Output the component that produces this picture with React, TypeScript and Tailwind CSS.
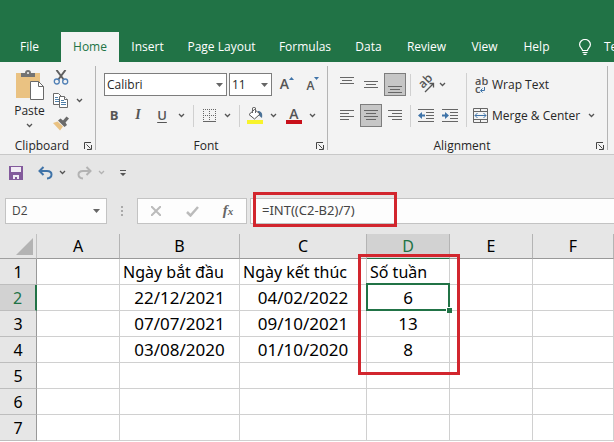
import { useState } from "react";
import type { ReactNode } from "react";
import clsx from "clsx";

const tabs = [
  { name: "File", width: "w-[59px] pr-1" },
  { name: "Home", width: "w-[58px]" },
  { name: "Insert", width: "w-[57px]" },
  { name: "Page Layout", width: "w-[91px]" },
  { name: "Formulas", width: "w-[76px]" },
  { name: "Data", width: "w-[51px]" },
  { name: "Review", width: "w-[65px]" },
  { name: "View", width: "w-[51px]" },
  { name: "Help", width: "w-[53px]" },
];

const columns = ["A", "B", "C", "D", "E", "F"];

const rows = [
  ["", "Ngày bắt đầu", "Ngày kết thúc", "Số tuần", "", ""],
  ["", "22/12/2021", "04/02/2022", "6", "", ""],
  ["", "07/07/2021", "09/10/2021", "13", "", ""],
  ["", "03/08/2020", "01/10/2020", "8", "", ""],
  ["", "", "", "", "", ""],
  ["", "", "", "", "", ""],
  ["", "", "", "", "", ""],
];

function Caret({ className = "text-[#555]" }: { className?: string }) {
  return (
    <svg width="7" height="5" viewBox="0 0 7 5" className={className}>
      <path d="M1 1l2.5 2.5L6 1" fill="none" stroke="currentColor" strokeWidth="1.3" />
    </svg>
  );
}

function Triangle({ className }: { className?: string }) {
  return (
    <svg width="7" height="4" viewBox="0 0 7 4" className={className}>
      <path d="M0 0h7L3.5 4z" fill="#666" />
    </svg>
  );
}

interface ToolProps {
  label: string;
  width?: string;
  pressed?: boolean;
  children: ReactNode;
}

function Tool({ label, width = "w-6", pressed, children }: ToolProps) {
  return (
    <button
      type="button"
      aria-label={label}
      aria-pressed={pressed}
      className={clsx(
        "flex h-[23px] shrink-0 items-center justify-center",
        width,
        pressed && "border border-[#7d7d7d] bg-[#c6c6c6]"
      )}
    >
      {children}
    </button>
  );
}

function Separator({ className = "h-[22px]" }: { className?: string }) {
  return <div className={clsx("w-px shrink-0 bg-[#d0d0d0]", className)} />;
}

function GroupLabel({ name }: { name: string }) {
  return (
    <div className="flex h-4 items-center pr-[3px]">
      <span className="flex-1 text-center">{name}</span>
      <button type="button" aria-label={`${name} settings`}>
        <svg width="8" height="8" viewBox="0 0 8 8" fill="none" stroke="#444">
          <path d="M.5 7V.5H7M2.5 2.5l4 4M7.5 3v4.5H3" />
        </svg>
      </button>
    </div>
  );
}

interface LinesProps {
  lines: [number, number, number][];
}

// Each line is [x, y, length]
function Lines({ lines }: LinesProps) {
  return (
    <svg width="16" height="16" viewBox="0 0 16 16" fill="#666" className="shrink-0">
      {lines.map(([x, y, length]) => (
        <rect key={y} x={x} y={y} width={length} height="1" />
      ))}
    </svg>
  );
}

function ClipboardGroup() {
  return (
    <section aria-label="Clipboard" className="flex w-[95px] shrink-0 flex-col">
      <div className="flex flex-1 pt-2">
        <button type="button" className="flex w-[50px] flex-col items-center pl-[9px]">
          <svg width="28" height="30" viewBox="0 0 28 30" className="shrink-0">
            <path d="M0 3h24v25H0z" fill="#eac282" />
            <path d="M5 7V3h4c0-2 1-3 3-3s3 1 3 3h4v4z" fill="#737373" />
            <circle cx="12" cy="3" r="1" fill="#f3f3f3" />
            <path d="M14.5 11.5h8l5 5v13h-13z" fill="#fff" stroke="#6a6a6a" />
            <path d="M22.5 11.5v5h5" fill="none" stroke="#6a6a6a" />
          </svg>
          <span className="mt-[3px] leading-4">Paste</span>
          <span className="mt-1">
            <Caret />
          </span>
        </button>
        <div className="flex flex-col gap-2 pl-[3px]">
          <button type="button" aria-label="Cut" className="h-[15px] w-4">
            <svg width="16" height="15" viewBox="0 0 16 15" fill="none">
              <path d="M3.5 0L11 10M12.5 0L5 10" stroke="#5f5f5f" strokeWidth="2" />
              <circle cx="3.8" cy="11.5" r="2.5" stroke="#4f7fb5" strokeWidth="1.3" />
              <circle cx="12.2" cy="11.5" r="2.5" stroke="#4f7fb5" strokeWidth="1.3" />
            </svg>
          </button>
          <div className="flex items-center gap-[7px]">
            <button type="button" aria-label="Copy" className="h-[15px] w-4">
              <svg width="16" height="15" viewBox="0 0 16 15" fill="#fff" stroke="#6a6a6a">
                <path d="M.5.5h5l3 3v8h-8z" />
                <path d="M2 4.5h3M2 6.5h4M2 8.5h4" stroke="#4f7fa8" />
                <path d="M6.5 3.5h5l3 3v8h-8z" />
                <path d="M11.5 3.5v3h3" />
                <path d="M8 7.5h3M8 9.5h5M8 11.5h5" stroke="#4f7fa8" />
              </svg>
            </button>
            <button type="button" aria-label="Copy options">
              <Caret />
            </button>
          </div>
          <button type="button" aria-label="Format Painter" className="h-[15px] w-4">
            <svg width="16" height="15" viewBox="0 0 16 15">
              <path d="M0 7l4.5-1.5 5.5 5L7 14.5z" fill="#eac282" />
              <path d="M5 4.5L7.5 2.5 10 4.5 13.5.5 16 2.5l-3.5 4L14 9l-2.5 2z" fill="#6a6a6a" />
            </svg>
          </button>
        </div>
      </div>
      <GroupLabel name="Clipboard" />
    </section>
  );
}

function FontGroup() {
  return (
    <section aria-label="Font" className="flex w-[231px] shrink-0 flex-col">
      <div className="flex flex-1 flex-col gap-2 pt-[11px]">
        <div className="flex items-center gap-[2px] pl-2">
          <div className="relative">
            <select
              aria-label="Font name"
              className="block h-[23px] w-[123px] appearance-none border border-[#7d7d7d] bg-white pl-[2px]"
            >
              <option>Calibri</option>
            </select>
            <Triangle className="pointer-events-none absolute top-[10px] right-1" />
          </div>
          <div className="relative">
            <select
              aria-label="Font size"
              className="block h-[23px] w-[43px] appearance-none border border-[#7d7d7d] bg-white pl-[2px]"
            >
              <option>11</option>
            </select>
            <Triangle className="pointer-events-none absolute top-[10px] right-1" />
          </div>
          <Tool label="Increase Font Size" width="w-[26px]">
            <span className="text-[14px] font-semibold text-[#555]">A</span>
            <svg width="5" height="3" viewBox="0 0 5 3" className="mb-3 shrink-0">
              <path d="M0 3h5L2.5 0z" fill="#3f73a8" />
            </svg>
          </Tool>
          <Tool label="Decrease Font Size" width="w-[22px]">
            <span className="pt-[3px] text-xs font-semibold text-[#555]">A</span>
            <svg width="5" height="3" viewBox="0 0 5 3" className="mb-3 shrink-0">
              <path d="M0 0h5L2.5 3z" fill="#3f73a8" />
            </svg>
          </Tool>
        </div>
        <div className="flex items-center pl-[6px]">
          <Tool label="Bold">
            <span className="text-[13px] font-bold text-[#555]">B</span>
          </Tool>
          <Tool label="Italic">
            <span className="font-['Liberation_Serif',serif] text-[14px] font-bold text-[#555] italic">
              I
            </span>
          </Tool>
          <Tool label="Underline">
            <span className="text-[13px] font-semibold text-[#555] underline underline-offset-2">
              U
            </span>
          </Tool>
          <Tool label="Underline options" width="w-[14px]">
            <Caret />
          </Tool>
          <Separator className="mx-[5px] h-[22px]" />
          <Tool label="Borders" width="w-5">
            <svg width="13" height="13" viewBox="0 0 13 13" fill="none" stroke="#666">
              <path d="M0 .5h13M0 6.5h13M.5 0v13M6.5 0v13M12.5 0v13" strokeDasharray="1 1" />
              <path d="M0 12.5h13" />
            </svg>
          </Tool>
          <Tool label="Borders options" width="w-4">
            <Caret />
          </Tool>
          <Separator className="mx-1 h-[22px]" />
          <Tool label="Fill Color" width="w-[22px]">
            <svg width="16" height="17" viewBox="0 0 16 17">
              <path d="M11 4c3 0 5 2 4 7-2-1-3-3-4-4z" fill="#4b7297" />
              <path d="M2 7.5l5.5-5L13 7l-5.5 5z" fill="#fff" stroke="#555" />
              <path d="M5.5 6V1c0-1 3-1 3 0v5" fill="none" stroke="#666" />
              <path d="M0 13h16v4H0z" fill="#f8f32b" />
            </svg>
          </Tool>
          <Tool label="Fill Color options" width="w-[14px]">
            <Caret />
          </Tool>
          <Tool label="Font Color" width="w-7">
            <span className="flex w-4 flex-col items-center">
              <span className="text-[14px] leading-[13px] font-semibold text-[#555]">A</span>
              <span className="h-1 w-4 bg-[#c8101a]" />
            </span>
          </Tool>
          <Tool label="Font Color options" width="w-2">
            <Caret />
          </Tool>
        </div>
      </div>
      <GroupLabel name="Font" />
    </section>
  );
}

function AlignmentGroup() {
  return (
    <section aria-label="Alignment" className="flex w-[279px] shrink-0 flex-col">
      <div className="flex flex-1 pt-[11px] pl-2">
        <div className="flex flex-col gap-2">
          <div className="flex items-center">
            <Tool label="Top Align" width="w-[22px]">
              <Lines lines={[[1, 0, 14], [3, 3, 10], [1, 6, 14]]} />
            </Tool>
            <Tool label="Middle Align" width="w-[26px]">
              <Lines lines={[[1, 4, 14], [3, 7, 10], [1, 10, 14]]} />
            </Tool>
            <Tool label="Bottom Align" width="w-[22px]" pressed>
              <Lines lines={[[1, 9, 14], [3, 12, 10], [1, 15, 14]]} />
            </Tool>
            <Separator className="mx-1 h-[22px]" />
            <Tool label="Orientation" width="w-[22px]">
              <svg width="18" height="17" viewBox="0 0 18 17" overflow="visible">
                <text
                  x="6"
                  y="13"
                  transform="rotate(-45 6 13)"
                  fontSize="12"
                  fontWeight="600"
                  fill="#555"
                >
                  ab
                </text>
                <path d="M8 16l8-8M12.5 7.500h4v4" fill="none" stroke="#555" strokeWidth="1.3" />
              </svg>
            </Tool>
            <Tool label="Orientation options" width="w-[10px]">
              <Caret />
            </Tool>
          </div>
          <div className="flex items-center">
            <Tool label="Align Left" width="w-[22px]">
              <Lines lines={[[1, 2, 14], [1, 5, 9], [1, 8, 14], [1, 11, 9]]} />
            </Tool>
            <div className="flex w-[26px] justify-center">
              <Tool label="Center" width="w-[22px]" pressed>
                <Lines lines={[[1, 2, 14], [3, 5, 10], [1, 8, 14], [3, 11, 10]]} />
              </Tool>
            </div>
            <Tool label="Align Right" width="w-[22px]">
              <Lines lines={[[1, 2, 14], [5, 5, 10], [1, 8, 14], [5, 11, 10]]} />
            </Tool>
            <Separator className="mx-1 h-[22px]" />
            <Tool label="Decrease Indent" width="w-[22px]">
              <svg width="16" height="14" viewBox="0 0 16 14">
                <path d="M0 .5h16M8 3.5h8M8 6.5h8M8 9.5h8M0 12.5h16" stroke="#666" />
                <path d="M0 6.500L4 3v2.500h3v2H4V10z" fill="#3f73a8" />
              </svg>
            </Tool>
            <Tool label="Increase Indent" width="w-[26px]">
              <svg width="16" height="14" viewBox="0 0 16 14">
                <path d="M0 .5h16M8 3.5h8M8 6.5h8M8 9.5h8M0 12.5h16" stroke="#666" />
                <path d="M7 6.500L3 3v2.500H0v2h3V10z" fill="#3f73a8" />
              </svg>
            </Tool>
          </div>
        </div>
        <Separator className="mr-[6px] ml-[3px] h-[54px]" />
        <div className="flex flex-1 flex-col gap-2">
          <button type="button" className="flex h-[23px] items-center gap-1">
            <span className="flex w-[15px] flex-col pl-[2px] text-left text-[11px] leading-2 font-semibold text-[#555]">
              <span>ab</span>
              <span className="flex items-end">
                c
                <svg width="5" height="6" viewBox="0 0 5 6" fill="none" stroke="#3f73a8">
                  <path d="M4.5 0v3.500H1M2.500 1.500l-2 2 2 2" />
                </svg>
              </span>
            </span>
            <span>Wrap Text</span>
          </button>
          <div className="flex items-center justify-between pr-3">
            <button type="button" className="flex h-[23px] items-center gap-1">
              <svg width="15" height="15" viewBox="0 0 15 15" fill="none" stroke="#666">
                <path d="M.5.5h14v14H.5zM0 3.5h15M0 11.5h15M7.5 0v3.5M7.5 11.5v3.5" />
                <path d="M2 7.5h11M4.5 5L2 7.5 4.5 10M10.5 5L13 7.5 10.5 10" stroke="#3f73a8" />
              </svg>
              <span>Merge &amp; Center</span>
            </button>
            <button type="button" aria-label="Merge options">
              <Caret />
            </button>
          </div>
        </div>
      </div>
      <GroupLabel name="Alignment" />
    </section>
  );
}

function QuickAccess() {
  return (
    <div className="flex h-[43px] items-center pb-2 pl-[9px]">
      <button type="button" aria-label="Save">
        <svg width="14" height="14" viewBox="0 0 14 14">
          <path d="M0 0h14v14H0z" fill="#835a9c" />
          <path d="M2 1h10v5H2zM4 9h6v4H8v-2H6v2H4z" fill="#f1ebf4" />
        </svg>
      </button>
      <button type="button" aria-label="Undo" className="ml-[15px]">
        <svg width="15" height="14" viewBox="0 0 15 14" fill="none" stroke="#3f73a8">
          <path d="M5.5 1L1.5 5l4 4M2 5h7c6 0 6 7 0 7.5" strokeWidth="2" />
        </svg>
      </button>
      <button type="button" aria-label="Undo options" className="ml-[6px]">
        <Caret />
      </button>
      <button type="button" aria-label="Redo" className="ml-[11px]">
        <svg width="15" height="14" viewBox="0 0 15 14" fill="none" stroke="#b3b3b3">
          <path d="M9.5 1l4 4-4 4M13 5H6C0 5 0 12 6 12.5" strokeWidth="2" />
        </svg>
      </button>
      <button type="button" aria-label="Redo options" className="ml-[6px]">
        <Caret className="text-[#b3b3b3]" />
      </button>
      <button type="button" aria-label="Customize Quick Access Toolbar" className="ml-[15px]">
        <svg width="6" height="6" viewBox="0 0 6 6" fill="#555">
          <path d="M0 0h6v1H0zM0 3h6L3 6z" />
        </svg>
      </button>
    </div>
  );
}

function FormulaBar() {
  const [formula, setFormula] = useState("=INT((C2-B2)/7)");

  return (
    <div className="flex h-[26px] pl-[5px] text-[#444]">
      <div className="flex w-[102px] shrink-0 items-center border border-[#c3c3c3] bg-[#fdfdfd] pr-[6px]">
        <input
          aria-label="Name box"
          defaultValue="D2"
          className="w-full min-w-0 bg-transparent pl-[6px] outline-none"
        />
        <button type="button" aria-label="Named cells">
          <Triangle />
        </button>
      </div>
      <div className="flex w-[30px] shrink-0 flex-col items-center justify-center gap-[2px]">
        <span className="size-[2px] bg-[#aaa]" />
        <span className="size-[2px] bg-[#aaa]" />
        <span className="size-[2px] bg-[#aaa]" />
      </div>
      <div className="flex w-[110px] shrink-0 items-center border border-[#c3c3c3] bg-[#fdfdfd]">
        <Tool label="Cancel" width="w-9">
          <svg width="10" height="10" viewBox="0 0 10 10" stroke="#bbb" strokeWidth="2">
            <path d="M0 0l10 10M10 0L0 10" />
          </svg>
        </Tool>
        <Tool label="Enter" width="w-9">
          <svg width="13" height="11" viewBox="0 0 13 11" fill="none" stroke="#bbb" strokeWidth="2.5">
            <path d="M1 6l3.5 3.5L12 1" />
          </svg>
        </Tool>
        <Tool label="Insert Function" width="w-9">
          <span className="font-['Liberation_Serif',serif] text-[15px] font-bold text-[#666] italic">
            f<span className="text-[11px]">x</span>
          </span>
        </Tool>
      </div>
      <div className="relative ml-[3px] flex flex-1 border-y border-l border-[#c3c3c3] bg-[#fdfdfd]">
        <input
          aria-label="Formula"
          value={formula}
          onChange={(e) => {
            setFormula(e.target.value);
          }}
          className="w-full min-w-0 bg-transparent pl-[11px] font-['Noto_Sans',sans-serif] text-[13px] outline-none"
        />
        <div className="pointer-events-none absolute -top-[7px] left-[2px] h-[35px] w-36 border-3 border-[#d2262e]" />
      </div>
    </div>
  );
}

function Sheet() {
  return (
    <table className="w-full table-fixed border-separate border-spacing-0 bg-white text-center font-['Noto_Sans',sans-serif] text-[16px] leading-6 text-black">
      <colgroup>
        <col className="w-[37px]" />
        <col className="w-[83px]" />
        <col className="w-[120px]" />
        <col className="w-[127px]" />
        <col className="w-[83px]" />
        <col className="w-[83px]" />
        <col />
      </colgroup>
      <thead>
        <tr className="h-[25px] bg-[#e6e6e6]">
          <th className="border-r border-b border-[#a0a0a0] border-r-[#c0c0c0] p-0">
            <svg width="17" height="17" viewBox="0 0 17 17" className="ml-4">
              <path d="M17 0v17H0z" fill="#b3b3b3" />
            </svg>
          </th>
          {columns.map((column) => (
            <th
              key={column}
              scope="col"
              className={clsx(
                "border-r border-b border-r-[#b4b4b4] p-0 font-normal",
                column === "D"
                  ? "border-b-[#217346] bg-[#d2d2d2] text-[#217346]"
                  : "border-b-[#999]"
              )}
            >
              {column}
            </th>
          ))}
        </tr>
      </thead>
      <tbody>
        {rows.map((cells, r) => (
          <tr key={r} className="h-[26px]">
            <th
              scope="row"
              className={clsx(
                "border-b border-b-[#bdbdbd] p-0 font-normal",
                r === 1
                  ? "border-r-2 border-r-[#217346] bg-[#d2d2d2] text-[#217346]"
                  : "border-r border-r-[#999] bg-[#e6e6e6]"
              )}
            >
              {r + 1}
            </th>
            {cells.map((cell, c) => (
              <td
                key={c}
                className={clsx(
                  "relative border-r border-b border-[#d0d0d0] whitespace-nowrap",
                  r === 0 ? "py-0 pr-0 pl-[3px] text-left" : "p-0 text-[17px]"
                )}
              >
                {cell}
                {r === 0 && c === 3 && (
                  <div className="pointer-events-none absolute -top-[5px] -left-[9px] z-10 h-[121px] w-[102px] border-3 border-[#d2262e]" />
                )}
                {r === 1 && c === 3 && (
                  <>
                    <div className="pointer-events-none absolute -inset-x-px -top-[2px] -bottom-px border-2 border-[#217346]" />
                    <div className="absolute -right-[3px] -bottom-[3px] z-10 size-[6px] border-t border-l border-white bg-[#217346]" />
                  </>
                )}
              </td>
            ))}
          </tr>
        ))}
      </tbody>
    </table>
  );
}

export default function App() {
  const [active, setActive] = useState("Home");

  return (
    <div className="min-h-screen overflow-hidden bg-white font-['Open_Sans',sans-serif] text-xs text-[#262626]">
      <header className="bg-[#217346] pt-8 text-white">
        <nav className="flex h-[30px] pl-[2px]">
          {tabs.map(({ name, width }) => (
            <button
              key={name}
              type="button"
              onClick={() => {
                setActive(name);
              }}
              className={clsx(
                "shrink-0 whitespace-nowrap",
                width,
                name === active && "bg-[#f3f3f3] text-[#217346]"
              )}
            >
              {name}
            </button>
          ))}
          <button type="button" className="flex shrink-0 items-center gap-[13px] pl-4">
            <svg width="12" height="16" viewBox="0 0 12 16" fill="none" stroke="#fff" strokeWidth="1.2">
              <path d="M3.5 11.5c0-2-2.9-3-2.9-6a5.4 5 0 0 1 10.8 0c0 3-2.9 4-2.9 6zM3.5 13.5h5M4.5 15.4h3" />
            </svg>
            <span>Te</span>
          </button>
        </nav>
      </header>
      <div className="flex h-[93px] border-b border-[#c8c8c8] bg-[#f3f3f3]">
        <ClipboardGroup />
        <div className="my-1 w-px shrink-0 bg-[#b4b4b4]" />
        <FontGroup />
        <div className="my-1 w-px shrink-0 bg-[#b4b4b4]" />
        <AlignmentGroup />
        <div className="my-1 w-px shrink-0 bg-[#b4b4b4]" />
      </div>
      <div className="bg-[#e6e6e6] pb-[10px]">
        <QuickAccess />
        <FormulaBar />
      </div>
      <Sheet />
    </div>
  );
}
